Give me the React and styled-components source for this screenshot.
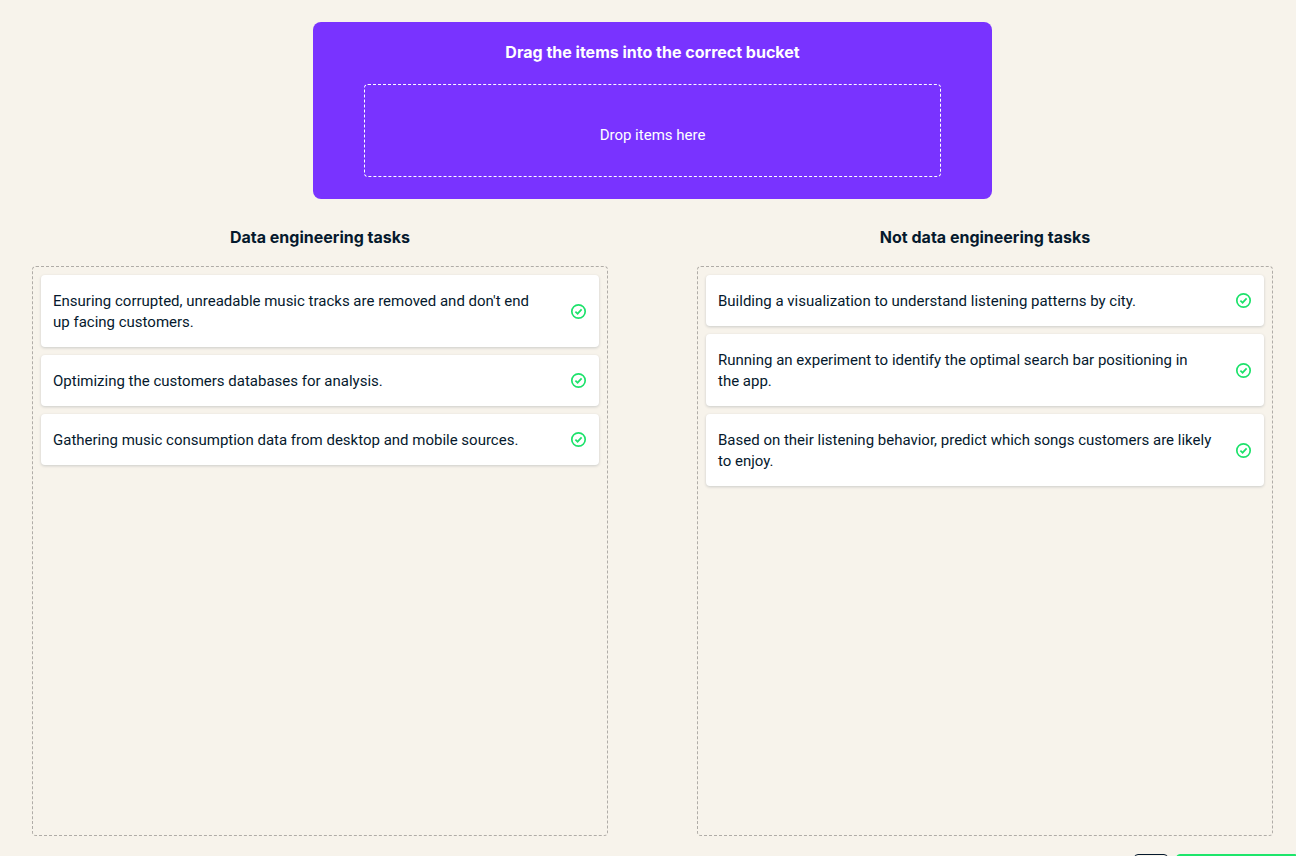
import React from "react";
import styled, { createGlobalStyle } from "styled-components";

const GlobalStyle = createGlobalStyle`
  *, *::before, *::after { box-sizing: border-box; }
  body {
    margin: 0;
    overflow: hidden;
    background: #f7f3eb;
    color: #05192d;
    font: 400 15px/21px Roboto, "Noto Sans", sans-serif;
  }
`;

const Page = styled.div`
  height: 100vh;
  overflow: hidden;
`;

const Exercise = styled.main`
  padding: 22px 23px 18px 32px;
`;

const Source = styled.section`
  max-width: 679px;
  margin: 0 auto;
  padding: 19px 51px 22px;
  border-radius: 8px;
  background: #7933ff;
  color: #fff;
`;

const Heading = styled.h2`
  margin: 0;
  font-family: Inter, "Noto Sans", sans-serif;
  font-size: 16px;
  line-height: 22px;
  font-weight: 700;
  text-align: center;
`;

const DropArea = styled.div`
  display: flex;
  align-items: center;
  justify-content: center;
  height: 93px;
  margin-top: 21px;
  padding-top: 10px;
  border: 1px dashed #fff;
  border-radius: 4px;
`;

const Buckets = styled.div`
  display: grid;
  grid-template-columns: 1fr 1fr;
  gap: 89px;
  margin-top: 27px;
`;

const Bucket = styled.section`
  display: flex;
  flex-direction: column;
  gap: 18px;
`;

const CardList = styled.ul`
  display: flex;
  flex-direction: column;
  gap: 8px;
  min-height: 570px;
  margin: 0;
  padding: 8px;
  list-style: none;
  border: 1px dashed #b0aca7;
  border-radius: 4px;
`;

const Card = styled.li`
  display: flex;
  align-items: center;
  justify-content: space-between;
  gap: 16px;
  padding: 0 12px;
  border-radius: 4px;
  background: #fff;
  box-shadow: 0 1px 3px rgba(5, 25, 45, 0.18);
`;

const CardText = styled.span`
  padding: 16px 0 14px;
  white-space: pre-line;
`;

const CheckIcon = styled.svg`
  flex: none;
  width: 17px;
  height: 17px;
  fill: none;
  stroke: #1de26b;
  stroke-width: 1.7;
`;

const Footer = styled.footer`
  display: flex;
  justify-content: flex-end;
  gap: 8px;
`;

const FooterButton = styled.button`
  width: ${(p) => (p.$primary ? "120px" : "34px")};
  height: 36px;
  padding: 0;
  border: 1px solid ${(p) => (p.$primary ? "#1de66b" : "#05192d")};
  border-radius: ${(p) => (p.$primary ? "4px 0 0 4px" : "4px")};
  background: ${(p) => (p.$primary ? "#1de66b" : "transparent")};
`;

const buckets = [
  {
    title: "Data engineering tasks",
    items: [
      "Ensuring corrupted, unreadable music tracks are removed and don't end\nup facing customers.",
      "Optimizing the customers databases for analysis.",
      "Gathering music consumption data from desktop and mobile sources.",
    ],
  },
  {
    title: "Not data engineering tasks",
    items: [
      "Building a visualization to understand listening patterns by city.",
      "Running an experiment to identify the optimal search bar positioning in\nthe app.",
      "Based on their listening behavior, predict which songs customers are likely\nto enjoy.",
    ],
  },
];

function Check() {
  return (
    <CheckIcon viewBox="0 0 17 17" role="img" aria-label="Correct">
      <circle cx="8.5" cy="8.5" r="6.7" />
      <path d="M5.4 8.7 7.6 10.7 11.6 6.4" />
    </CheckIcon>
  );
}

export default function App() {
  return (
    <Page>
      <GlobalStyle />
      <Exercise>
        <Source>
          <Heading as="h1">Drag the items into the correct bucket</Heading>
          <DropArea>Drop items here</DropArea>
        </Source>
        <Buckets>
          {buckets.map((bucket) => (
            <Bucket key={bucket.title}>
              <Heading>{bucket.title}</Heading>
              <CardList>
                {bucket.items.map((item) => (
                  <Card key={item}>
                    <CardText>{item}</CardText>
                    <Check />
                  </Card>
                ))}
              </CardList>
            </Bucket>
          ))}
        </Buckets>
      </Exercise>
      <Footer>
        <FooterButton type="button" aria-label="Previous" />
        <FooterButton type="button" aria-label="Continue" $primary />
      </Footer>
    </Page>
  );
}
